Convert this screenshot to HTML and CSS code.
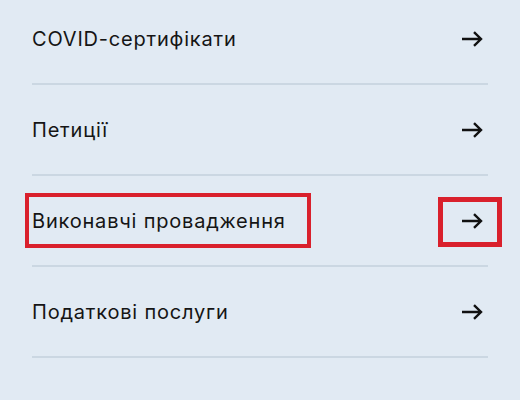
FILE: index.html
```html
<!DOCTYPE html>
<html lang="uk">
<head>
<meta charset="utf-8">
<link rel="stylesheet" href="styles.css">
</head>
<body>
<ul class="menu">
  <li class="item">
    <span class="label">COVID-сертифікати</span>
    <span class="arrow"><svg width="22" height="16" viewBox="0 0 22 16"><path d="M1 8H20M13 1.2L20 8L13 14.8" fill="none" stroke="#111" stroke-width="2.4"/></svg></span>
  </li>
  <li class="item">
    <span class="label">Петиції</span>
    <span class="arrow"><svg width="22" height="16" viewBox="0 0 22 16"><path d="M1 8H20M13 1.2L20 8L13 14.8" fill="none" stroke="#111" stroke-width="2.4"/></svg></span>
  </li>
  <li class="item">
    <span class="label marked">Виконавчі провадження</span>
    <span class="arrow marked-arrow"><svg width="22" height="16" viewBox="0 0 22 16"><path d="M1 8H20M13 1.2L20 8L13 14.8" fill="none" stroke="#111" stroke-width="2.4"/></svg></span>
  </li>
  <li class="item">
    <span class="label">Податкові послуги</span>
    <span class="arrow"><svg width="22" height="16" viewBox="0 0 22 16"><path d="M1 8H20M13 1.2L20 8L13 14.8" fill="none" stroke="#111" stroke-width="2.4"/></svg></span>
  </li>
</ul>
</body>
</html>
```

FILE: styles.css
```css
html, body {
  margin: 0;
  padding: 0;
  background: #e1eaf3;
  height: 100%;
  overflow: hidden;
}
body {
  font-family: "Inter", "Noto Sans", sans-serif;
  color: #151515;
}
.menu {
  list-style: none;
  margin: -6px 32px 0 32px;
  padding: 0;
}
.item {
  height: 89px;
  border-bottom: 2px solid #cbd7e2;
  display: flex;
  align-items: center;
  justify-content: space-between;
}
.label {
  font-size: 20px;
  line-height: 24px;
  font-weight: 400;
  letter-spacing: 0.8px;
}
.arrow {
  display: flex;
  align-items: center;
  justify-content: center;
  margin-right: 5px;
}
.arrow svg {
  display: block;
}
.marked {
  position: relative;
}
.marked::after {
  content: "";
  position: absolute;
  left: -7px;
  right: -25px;
  top: -16px;
  height: 55px;
  box-sizing: border-box;
  border: 4.5px solid #d9202c;
}
.marked-arrow {
  position: relative;
}
.marked-arrow::after {
  content: "";
  position: absolute;
  left: -23px;
  top: -16px;
  width: 64px;
  height: 50px;
  box-sizing: border-box;
  border: 5px solid #d9202c;
}
```
